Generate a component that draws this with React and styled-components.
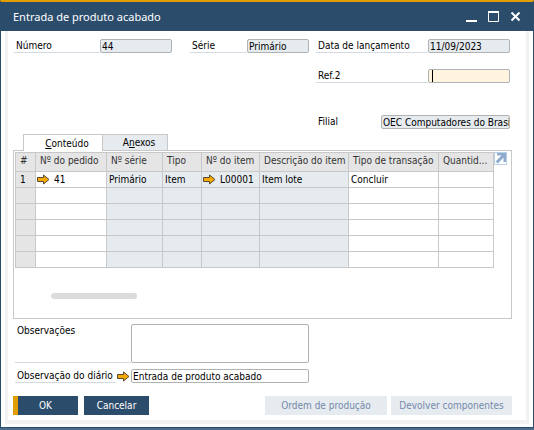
import React from "react";
import styled, { createGlobalStyle } from "styled-components";

const navy = "#2c4c6b";
const gold = "#e09e00";
const line = "#c8c8c8";
const fieldLine = "#b0b3b5";
const muted = "#e6ebef";

const GlobalStyle = createGlobalStyle`
  *, *::before, *::after { box-sizing: border-box; }
  body {
    margin: 0;
    background: #4d6c8b;
    color: #000;
    font: 10px/14px "DejaVu Sans Condensed", "DejaVu Sans", sans-serif;
  }
  input, textarea, button { font: inherit; color: inherit; }
`;

const Window = styled.main`
  border: 1px solid ${navy};
  border-top: 2px solid ${gold};
  background: #fff;
`;

const TitleBar = styled.header`
  display: flex;
  align-items: center;
  justify-content: space-between;
  height: 29px;
  margin: 0 -1px;
  padding: 0 11px 0 13px;
  background: ${navy};
  color: #fff;
`;

const Title = styled.h1`
  margin: 0;
  font: 11px/16px "Noto Sans", sans-serif;
`;

const WindowControls = styled.div`
  display: flex;
  gap: 8px;
`;

const ControlButton = styled.button`
  display: flex;
  padding: 0;
  border: 0;
  background: none;
  color: #fff;
`;

const Body = styled.div`
  margin: 0 4px 3px;
  padding: 8px 14px 5px 5px;
  border: solid #f2f2f2;
  border-width: 0 3px 4px;
`;

const HeaderForm = styled.form`
  display: grid;
  grid-template-columns: 169fr 119fr 194fr;
  column-gap: 7px;
  margin: 0 2px 0 1px;
`;

const FieldGroup = styled.div`
  display: flex;
  grid-column: ${(p) => p.$column};
  margin-top: ${(p) => p.$top || 0}px;
  margin-right: ${(p) => p.$right || 0}px;
`;

const Label = styled.label`
  flex: 0 0 ${(p) => p.$width}px;
  padding: 1px 0 0 2px;
  border-bottom: 1px solid ${(p) => (p.$plain ? "transparent" : "#d3dae1")};
  line-height: 12px;
  white-space: nowrap;
`;

const Field = styled.input`
  flex: 1;
  min-width: 0;
  width: 100%;
  height: 14px;
  padding: 1px 0 0 1px;
  border: 1px solid ${fieldLine};
  border-radius: 2px;
  outline: 0;
  background: ${(p) => (p.$active ? "#fff5de" : p.readOnly ? muted : "#fff")};
  caret-color: transparent;
`;

const CaretBox = styled.div`
  position: relative;
  display: flex;
  flex: 1;
  &::after {
    content: "";
    position: absolute;
    left: 4px;
    top: 1px;
    width: 1px;
    height: 12px;
    background: #000;
  }
`;

const TabList = styled.div`
  display: flex;
  margin: 5px 0 0 10px;
`;

const Tab = styled.button`
  position: relative;
  width: ${(p) => p.$width}px;
  height: ${(p) => (p.$selected ? 17 : 16)}px;
  margin-bottom: ${(p) => (p.$selected ? -1 : 0)}px;
  padding: 1px 0 0 8px;
  border: 1px solid ${line};
  border-left-width: ${(p) => (p.$selected ? 1 : 0)}px;
  border-bottom: 0;
  background: ${(p) => (p.$selected ? "#fff" : muted)};
  line-height: 14px;
`;

const Panel = styled.section`
  padding: 1px 4px 19px 1px;
  border: 1px solid ${line};
`;

const GridArea = styled.div`
  display: flex;
  align-items: flex-start;
`;

const Table = styled.table`
  flex: 1;
  width: 0;
  table-layout: fixed;
  border-spacing: 0;
  border: solid ${line};
  border-width: 1px 0 0 1px;
`;

const Col = styled.col`
  width: ${(p) => p.$width}px;
`;

const HeadCell = styled.th`
  height: 19px;
  padding: 0 0 2px 4px;
  border: solid ${line};
  border-width: 0 1px 1px 0;
  background: #e5e5e5;
  color: #333;
  font-weight: 400;
  text-align: left;
  white-space: nowrap;
  overflow: hidden;
`;

const Cell = styled.td`
  height: 16px;
  padding: 0 0 0 ${(p) => (p.$index ? 4 : 2)}px;
  border: solid ${line};
  border-width: 0 1px 1px 0;
  background: ${(p) => (p.$index ? "#e5e5e5" : p.$locked ? muted : "#fff")};
  line-height: 15px;
  white-space: nowrap;
`;

const LinkedValue = styled.span`
  display: flex;
  align-items: center;
  gap: 4px;
  height: 15px;
  margin-left: -1px;
`;

const LinkButton = styled.button`
  display: flex;
  padding: 0;
  border: 0;
  background: none;
`;

const ExpandButton = styled.button`
  display: flex;
  padding: 0;
  border: 1px solid #b9d0e6;
  background: #fff;
`;

const ScrollThumb = styled.div`
  width: 86px;
  height: 6px;
  margin: 25px 0 0 36px;
  border-radius: 3px;
  background: #dcdcdc;
`;

const RemarkForm = styled.form`
  width: 59%;
  margin: 5px 0 0 2px;
`;

const RemarkRow = styled.div`
  display: flex;
  margin-bottom: 6px;
`;

const Remarks = styled.textarea`
  flex: 1;
  min-width: 0;
  height: 39px;
  padding: 1px;
  border: 1px solid ${fieldLine};
  border-radius: 2px;
  outline: 0;
  resize: none;
`;

const JournalLink = styled(LinkButton)`
  flex: 0 0 15px;
  align-items: center;
  padding-left: 1px;
`;

const Footer = styled.footer`
  display: flex;
  gap: 6px;
  margin-top: 13px;
`;

const PrimaryButton = styled.button`
  width: 65px;
  height: 19px;
  padding: 0 ${(p) => (p.$main ? 5 : 0)}px 0 0;
  border: 0 solid ${gold};
  border-left-width: ${(p) => (p.$main ? 5 : 0)}px;
  background: ${navy};
  color: #fff;
`;

const SecondaryButton = styled.button`
  width: ${(p) => p.$width}px;
  height: 19px;
  margin-left: ${(p) => (p.$push ? "auto" : "-2px")};
  padding: 0;
  border: 0;
  background: ${muted};
  color: #7489ab;
`;

const Arrow = () => (
  <svg width="13" height="11" viewBox="0 0 13 11" aria-hidden="true">
    <path
      d="M0.500 3.500H6.500V1L12 5.500L6.500 10V7.500H0.500Z"
      fill="#f5a900"
      stroke="#5a4a35"
      strokeWidth="1"
    />
  </svg>
);

const columns = [
  { title: "#", width: 20 },
  { title: "Nº do pedido", width: 71 },
  { title: "Nº série", width: 56, locked: true },
  { title: "Tipo", width: 39, locked: true },
  { title: "Nº do item", width: 58, locked: true },
  { title: "Descrição do item", width: 89, locked: true },
  { title: "Tipo de transação", width: 90 },
  { title: "Quantid...", width: 55 },
];

const rows = [
  ["1", { target: "41" }, "Primário", "Item", { target: "L00001" }, "Item lote", "Concluir", ""],
  [], [], [], [], [],
];

const CellValue = ({ value }) =>
  value && value.target ? (
    <LinkedValue>
      <LinkButton type="button" aria-label={"Abrir " + value.target}>
        <Arrow />
      </LinkButton>
      {value.target}
    </LinkedValue>
  ) : (
    value || null
  );

export default function App() {
  return (
    <>
      <GlobalStyle />
      <Window>
        <TitleBar>
          <Title>Entrada de produto acabado</Title>
          <WindowControls>
            <ControlButton type="button" aria-label="Minimizar">
              <svg width="14" height="14" viewBox="0 0 14 14">
                <path d="M1 11H12" stroke="currentColor" strokeWidth="2" />
              </svg>
            </ControlButton>
            <ControlButton type="button" aria-label="Maximizar">
              <svg width="14" height="14" viewBox="0 0 14 14">
                <path d="M1.500 2V11.500H11.500V2" fill="none" stroke="currentColor" />
                <path d="M1 2H12" stroke="currentColor" strokeWidth="2" />
              </svg>
            </ControlButton>
            <ControlButton type="button" aria-label="Fechar">
              <svg width="14" height="14" viewBox="0 0 14 14">
                <path d="M2.500 2.500L10.500 10.500M10.500 2.500L2.500 10.500" stroke="currentColor" strokeWidth="2" />
              </svg>
            </ControlButton>
          </WindowControls>
        </TitleBar>
        <Body>
          <HeaderForm>
            <FieldGroup $column={1} $right={11}>
              <Label htmlFor="numero" $width={86}>Número</Label>
              <Field id="numero" readOnly value="44" />
            </FieldGroup>
            <FieldGroup $column={2}>
              <Label htmlFor="serie" $width={57}>Série</Label>
              <Field id="serie" readOnly value="Primário" />
            </FieldGroup>
            <FieldGroup $column={3}>
              <Label htmlFor="data" $width={112}>Data de lançamento</Label>
              <Field id="data" readOnly value="11/09/2023" />
            </FieldGroup>
            <FieldGroup $column={3} $top={16}>
              <Label htmlFor="ref2" $width={112}>Ref.2</Label>
              <CaretBox>
                <Field id="ref2" $active defaultValue="" />
              </CaretBox>
            </FieldGroup>
            <FieldGroup $column={3} $top={32}>
              <Label htmlFor="filial" $width={65} $plain>Filial</Label>
              <Field id="filial" readOnly value="OEC Computadores do Brasil" />
            </FieldGroup>
          </HeaderForm>

          <TabList role="tablist">
            <Tab type="button" role="tab" aria-selected="true" $selected $width={80}>
              <u>C</u>onteúdo
            </Tab>
            <Tab type="button" role="tab" aria-selected="false" $width={65}>
              A<u>n</u>exos
            </Tab>
          </TabList>

          <Panel role="tabpanel">
            <GridArea>
              <Table>
                <colgroup>
                  {columns.map((c) => (
                    <Col key={c.title} $width={c.width} />
                  ))}
                </colgroup>
                <thead>
                  <tr>
                    {columns.map((c) => (
                      <HeadCell key={c.title} scope="col">{c.title}</HeadCell>
                    ))}
                  </tr>
                </thead>
                <tbody>
                  {rows.map((row, r) => (
                    <tr key={r}>
                      {columns.map((c, i) => (
                        <Cell key={c.title} $index={i === 0} $locked={c.locked}>
                          <CellValue value={row[i]} />
                        </Cell>
                      ))}
                    </tr>
                  ))}
                </tbody>
              </Table>
              <ExpandButton type="button" aria-label="Expandir tabela">
                <svg width="11" height="11" viewBox="0 0 11 11">
                  <path d="M2 0H11V9H8.500V4.500L3 10.500L0.500 8.500L6.500 2.500H2Z" fill="#8faccf" />
                </svg>
              </ExpandButton>
            </GridArea>
            <ScrollThumb />
          </Panel>

          <RemarkForm>
            <RemarkRow>
              <Label htmlFor="obs" $width={116}>Observações</Label>
              <Remarks id="obs" defaultValue="" />
            </RemarkRow>
            <RemarkRow>
              <Label htmlFor="diario" $width={101}>Observação do diário</Label>
              <JournalLink type="button" aria-label="Abrir observação do diário">
                <Arrow />
              </JournalLink>
              <Field id="diario" defaultValue="Entrada de produto acabado" />
            </RemarkRow>
          </RemarkForm>

          <Footer>
            <PrimaryButton type="button" $main>OK</PrimaryButton>
            <PrimaryButton type="button">Cancelar</PrimaryButton>
            <SecondaryButton type="button" disabled $push $width={122}>Ordem de produção</SecondaryButton>
            <SecondaryButton type="button" disabled $width={121}>Devolver componentes</SecondaryButton>
          </Footer>
        </Body>
      </Window>
    </>
  );
}
